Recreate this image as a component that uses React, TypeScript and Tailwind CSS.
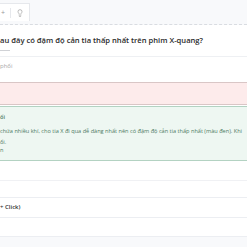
import { Lightbulb } from "lucide-react";

export default function App() {
  return (
    <div className="h-[247px] w-[247px] overflow-hidden bg-white font-['Open_Sans',sans-serif]">
      {/* toolbar */}
      <div className="flex h-[25px] items-start border-b border-dashed border-[#d9dce1] bg-[#f8f9fb] pt-[3px]">
        <div className="flex h-[18px] items-center gap-[5px] border-t border-r border-[#e6e8ec] bg-white pl-[1px] pr-[5px]">
          <span className="text-[7px] leading-none text-[#999]">+</span>
          <span className="h-[10px] w-px bg-[#e6e8ec]" />
          <Lightbulb size={8} strokeWidth={2} className="text-[#999]" />
        </div>
      </div>

      {/* question */}
      <div className="flex h-[32px] flex-col justify-center border-b border-[#eef0f3] pt-[3px]">
        <p className="whitespace-nowrap text-[7.6px] font-semibold leading-[12px] text-[#2a2a2a]">
          au đây có đậm độ cản tia thấp nhất trên phim X-quang?
        </p>
        <div className="mt-[4px] h-[1px] w-[10px] bg-[#d0d2d6]" />
      </div>

      {/* answer */}
      <div className="flex h-[25px] items-center pb-[6px]">
        <span className="text-[6px] text-[#a9a9a9]">phổi</span>
      </div>

      {/* wrong box */}
      <div className="h-[23px] border-y border-[#d9c6c6] bg-[#fdebeb]" />

      {/* explanation box */}
      <div className="mt-[1px] h-[55px] border-y border-[#b3d2c2] bg-[#eef7f2] pt-[6px] text-[5.6px] leading-[8px] text-[#4d7a63]">
        <p className="font-semibold">ối</p>
        <p className="mt-[6px] whitespace-nowrap">
          chứa nhiều khí, cho tia X đi qua dễ dàng nhất nên có đậm độ cản tia thấp nhất (màu đen). Khi
        </p>
        <p className="mt-[3px]">ổi.</p>
        <p>n</p>
      </div>

      {/* footer rows */}
      <div className="mt-[19px] h-[17px] border-t border-[#f0f1f4]" />
      <div className="flex h-[21px] items-center border-y border-[#eceef2]">
        <span className="text-[6px] font-semibold text-[#333]">+ Click)</span>
      </div>
      <div className="h-[18px]" />
      <div className="h-[30px] border-t border-[#eceef2] bg-[#f8f9fb]" />
    </div>
  );
}
